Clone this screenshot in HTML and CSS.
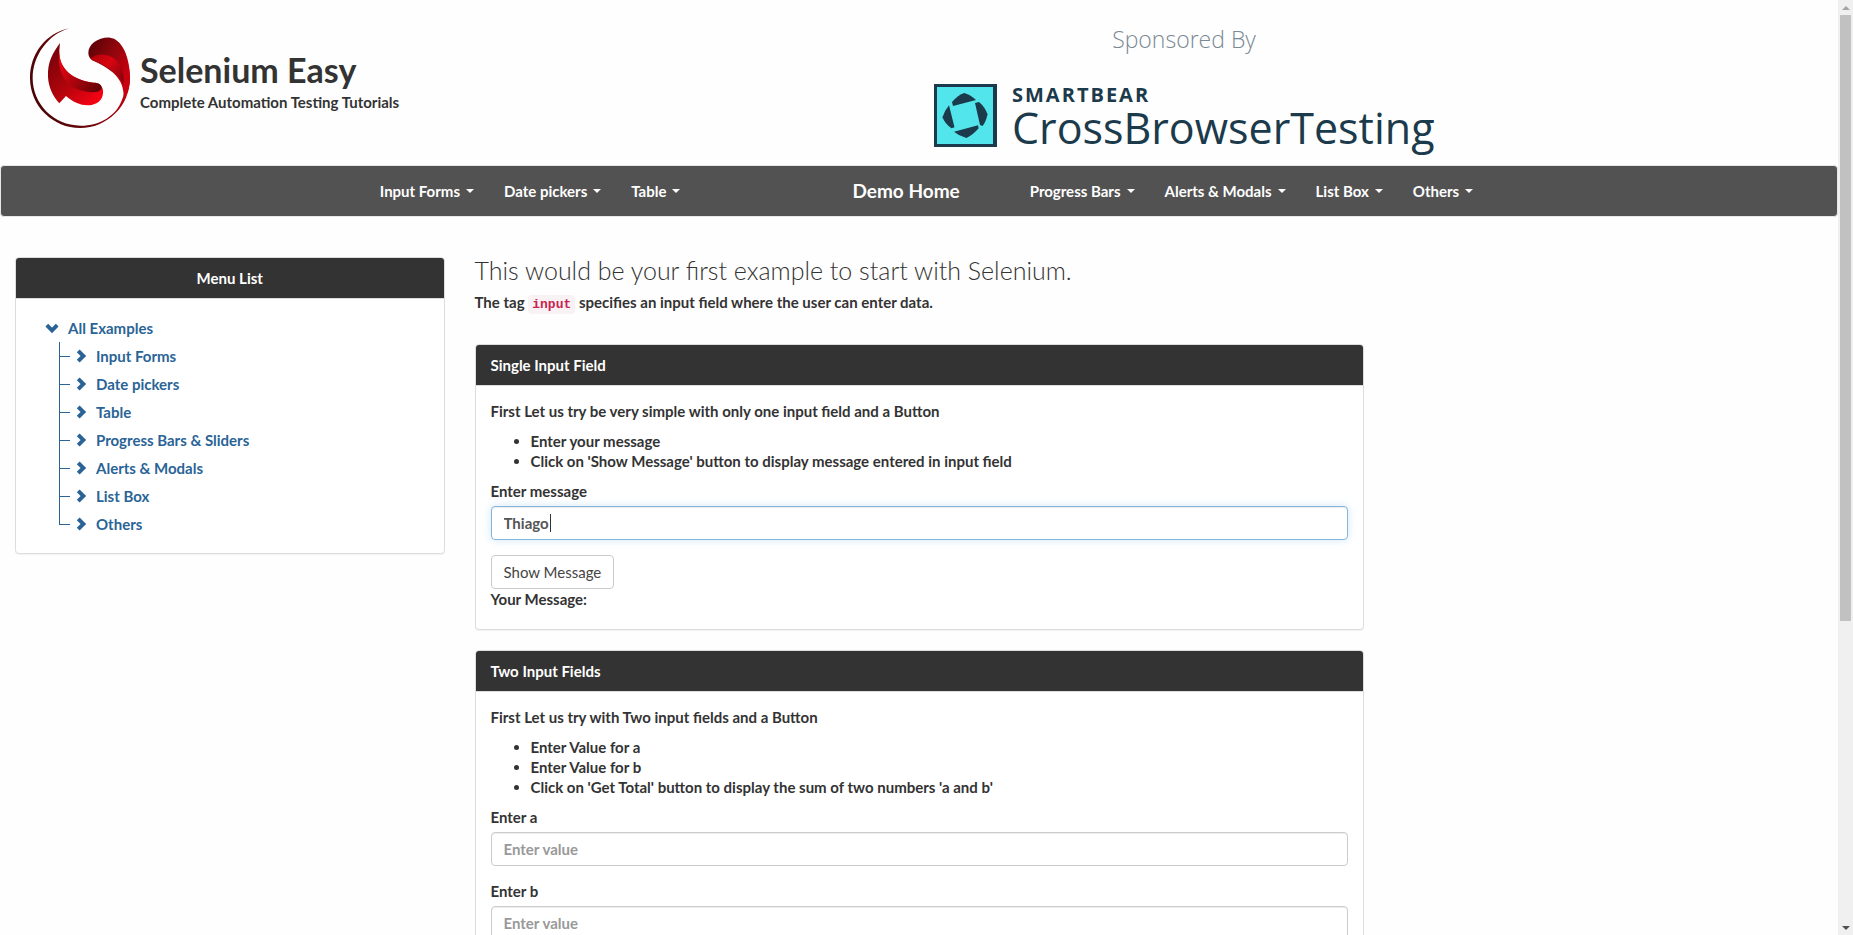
FILE: index.html
```html
<!DOCTYPE html>
<html lang="en">
<head>
<meta charset="utf-8">
<title>Selenium Easy</title>
<link rel="stylesheet" href="styles.css">
</head>
<body>
<svg class="defs" aria-hidden="true">
  <symbol id="chev" viewBox="0 0 14 14"><path d="M4.200 1.800 9.400 7l-5.200 5.200" fill="none" stroke="currentColor" stroke-width="3.900"/></symbol>
</svg>
<div class="window">
  <div class="page">
    <header class="header">
      <a class="brand" href="#">
        <svg class="brand-logo" viewBox="30 23 300 300" aria-hidden="true">
          <defs>
            <linearGradient id="ring" gradientUnits="userSpaceOnUse" x1="60" y1="260" x2="330" y2="170">
              <stop offset="0" stop-color="#4a0507"/><stop offset=".45" stop-color="#6d060b"/><stop offset="1" stop-color="#d0000f"/>
            </linearGradient>
            <linearGradient id="top" gradientUnits="userSpaceOnUse" x1="205" y1="80" x2="325" y2="150">
              <stop offset="0" stop-color="#5c0208"/><stop offset=".5" stop-color="#8e060c"/><stop offset="1" stop-color="#c8000f"/>
            </linearGradient>
            <linearGradient id="fold" gradientUnits="userSpaceOnUse" x1="215" y1="110" x2="315" y2="190">
              <stop offset="0" stop-color="#b0000b"/><stop offset=".4" stop-color="#d90511"/><stop offset="1" stop-color="#780208"/>
            </linearGradient>
            <linearGradient id="low" gradientUnits="userSpaceOnUse" x1="90" y1="110" x2="230" y2="250">
              <stop offset="0" stop-color="#7a0309"/><stop offset=".5" stop-color="#b3040c"/><stop offset="1" stop-color="#fa0214"/>
            </linearGradient>
            <linearGradient id="shade" gradientUnits="userSpaceOnUse" x1="120" y1="130" x2="245" y2="210">
              <stop offset="0" stop-color="#e80414"/><stop offset=".45" stop-color="#a8040c"/><stop offset="1" stop-color="#5c0207"/>
            </linearGradient>
          </defs>
          <path fill="url(#ring)" d="M148 24C78 38 30 100 30 173a150 150 0 0 0 300 0C330 145 322 120 312 100L303 165c12 23 14 50 3 73-16 47-66 78-124 78C100 316 38 250 38 174 38 105 85 42 148 24Z"/>
          <path fill="url(#top)" d="M217 120c-7-5-12-12-12-22 0-26 30-48 65-46 34 3 60 55 60 121 0 25-8 48-18 65-1-40-5-78-95-118Z"/>
          <path fill="url(#fold)" d="M211 114c18-14 45-16 70 0 25 17 34 45 29 80-14-35-38-52-93-74Z"/>
          <path fill="url(#low)" d="M120 68C98 98 82 125 84 170c2 32 14 56 34 79l20-22c22 20 49 31 77 27 25-5 36-22 34-44-3-18-15-23-29-23-62-7-105-42-102-97Z"/>
          <path fill="url(#shade)" d="M118 88c-4 56 42 92 102 99 16 0 26 6 25 18-6 10-24 13-44 9-58-8-92-50-83-126Z"/>
        </svg>
        <span class="brand-text">
          <span class="brand-name">Selenium Easy</span>
          <span class="brand-tagline">Complete Automation Testing Tutorials</span>
        </span>
      </a>
      <div class="sponsor">
        <p class="sponsor-label">Sponsored By</p>
        <a class="sponsor-link" href="#">
          <svg class="sponsor-icon" viewBox="0 0 63 63" aria-hidden="true">
            <rect width="63" height="63" fill="#1b3a4b"/><rect x="3" y="3" width="56" height="57" fill="#53e5ec"/>
            <g fill="#1b3a4b"><path d="M18 18Q24 11 30.300 9 37 11 42 16L19 22Z"/><path d="m41 19 4-1q6 5 8.500 12.300Q52 38 48.500 42L46 41Z"/><path d="m20 47.700 24-6.400.6 3Q39 51 32.400 54 25 52 20 47.700Z"/><path d="m15 21.300 5.500 22-3 1Q11 40 8.500 33.300 11 26 15 21.300Z"/></g>
          </svg>
          <span class="sponsor-text">
            <span class="sponsor-company">SMARTBEAR</span>
            <span class="sponsor-product">CrossBrowserTesting</span>
          </span>
        </a>
      </div>
    </header>

    <nav class="navbar">
      <ul class="nav nav-left">
        <li><a href="#">Input Forms <b class="caret"></b></a></li>
        <li><a href="#">Date pickers <b class="caret"></b></a></li>
        <li><a href="#">Table <b class="caret"></b></a></li>
      </ul>
      <a class="nav-home" href="#">Demo Home</a>
      <ul class="nav nav-right">
        <li><a href="#">Progress Bars <b class="caret"></b></a></li>
        <li><a href="#">Alerts &amp; Modals <b class="caret"></b></a></li>
        <li><a href="#">List Box <b class="caret"></b></a></li>
        <li><a href="#">Others <b class="caret"></b></a></li>
      </ul>
    </nav>

    <div class="row">
      <aside class="side">
        <section class="panel">
          <h2 class="panel-heading centered">Menu List</h2>
          <div class="panel-body">
            <a class="tree-root" href="#"><svg class="chev down" aria-hidden="true"><use href="#chev"/></svg>All Examples</a>
            <ul class="tree">
              <li><a href="#"><svg class="chev" aria-hidden="true"><use href="#chev"/></svg>Input Forms</a></li>
              <li><a href="#"><svg class="chev" aria-hidden="true"><use href="#chev"/></svg>Date pickers</a></li>
              <li><a href="#"><svg class="chev" aria-hidden="true"><use href="#chev"/></svg>Table</a></li>
              <li><a href="#"><svg class="chev" aria-hidden="true"><use href="#chev"/></svg>Progress Bars &amp; Sliders</a></li>
              <li><a href="#"><svg class="chev" aria-hidden="true"><use href="#chev"/></svg>Alerts &amp; Modals</a></li>
              <li><a href="#"><svg class="chev" aria-hidden="true"><use href="#chev"/></svg>List Box</a></li>
              <li><a href="#"><svg class="chev" aria-hidden="true"><use href="#chev"/></svg>Others</a></li>
            </ul>
          </div>
        </section>
      </aside>

      <main class="content">
        <h1 class="title">This would be your first example to start with Selenium.</h1>
        <p class="intro">The tag <code>input</code> specifies an input field where the user can enter data.</p>

        <section class="panel">
          <h2 class="panel-heading">Single Input Field</h2>
          <div class="panel-body">
            <p>First Let us try be very simple with only one input field and a Button</p>
            <ul class="steps">
              <li>Enter your message</li>
              <li>Click on 'Show Message' button to display message entered in input field</li>
            </ul>
            <form class="form">
              <div class="field">
                <label for="message">Enter message</label>
                <div class="control">
                  <input class="input active" id="message" type="text" value="Thiago">
                  <span class="text-cursor"></span>
                </div>
              </div>
              <button class="button" type="button">Show Message</button>
            </form>
            <div class="result">Your Message:</div>
          </div>
        </section>

        <section class="panel">
          <h2 class="panel-heading">Two Input Fields</h2>
          <div class="panel-body">
            <p>First Let us try with Two input fields and a Button</p>
            <ul class="steps">
              <li>Enter Value for a</li>
              <li>Enter Value for b</li>
              <li>Click on 'Get Total' button to display the sum of two numbers 'a and b'</li>
            </ul>
            <form class="form">
              <div class="field">
                <label for="value-a">Enter a</label>
                <input class="input" id="value-a" type="text" placeholder="Enter value">
              </div>
              <div class="field">
                <label for="value-b">Enter b</label>
                <input class="input" id="value-b" type="text" placeholder="Enter value">
              </div>
            </form>
          </div>
        </section>
      </main>
    </div>
  </div>

  <div class="scrollbar" aria-hidden="true">
    <span class="arrow up"></span>
    <div class="track"><div class="thumb"></div></div>
    <span class="arrow down-arrow"></span>
  </div>
</div>
</body>
</html>
```
FILE: styles.css
```css
* { box-sizing: border-box; }

body {
  margin: 0;
  background: #fefefe;
  color: #333;
  font: 700 15px/20px Lato, "Open Sans", sans-serif;
}

ul, p, h1, h2 { margin: 0; padding: 0; }
a { color: inherit; text-decoration: none; }
.defs { position: absolute; width: 0; height: 0; }

.window { display: flex; height: 100vh; }
.page { flex: 1; min-width: 0; overflow: hidden; }

/* Header */
.header {
  display: grid;
  grid-template-columns: 1fr 1fr;
  min-height: 165px;
}
.brand {
  display: flex;
  align-items: flex-start;
  gap: 10px;
  padding: 28px 30px 0;
}
.brand-logo { width: 100px; height: 100px; }
.brand-text { display: flex; flex-direction: column; padding-top: 20px; }
.brand-name { font-size: 34px; line-height: 44px; }

.sponsor {
  display: flex;
  flex-direction: column;
  align-items: flex-start;
  padding: 24px 15px 0;
  font-family: "Open Sans", "Noto Sans", sans-serif;
  color: #1b3a4b;
}
.sponsor-label {
  width: 500px;
  text-align: center;
  font-size: 23px;
  line-height: 30px;
  font-weight: 300;
  color: #7a8994;
}
.sponsor-link { display: flex; align-items: flex-start; gap: 15px; padding-top: 30px; }
.sponsor-icon { width: 63px; height: 63px; }
.sponsor-text { display: flex; flex-direction: column; }
.sponsor-company { font-size: 20px; line-height: 22px; font-weight: 700; letter-spacing: 2px; }
.sponsor-product { font-size: 43px; line-height: 43px; font-weight: 400; }

/* Navigation */
.navbar {
  display: flex;
  align-items: center;
  justify-content: center;
  margin-bottom: 40px;
  min-height: 52px;
  padding-left: 15px;
  border: 1px solid #e7e7e7;
  border-radius: 4px;
  background: #525252;
  color: #fff;
}
.nav { display: flex; list-style: none; }
.nav a { display: flex; align-items: center; gap: 6px; padding: 15px; }
.nav-home { margin: 0 40px 0 142px; padding: 15px; font-size: 19px; }
.caret {
  border-top: 4px solid #fff;
  border-left: 4px solid transparent;
  border-right: 4px solid transparent;
}

/* Columns */
.row { display: grid; grid-template-columns: 25% 50%; align-items: start; }
.side, .content { padding: 0 15px; }

.panel {
  margin-bottom: 20px;
  border: 1px solid #ddd;
  border-radius: 4px;
  background: #fff;
  box-shadow: 0 1px 1px rgba(0, 0, 0, .05);
}
.panel-heading {
  padding: 10px 15px;
  border-bottom: 1px solid #ddd;
  border-radius: 3px 3px 0 0;
  background: #333;
  color: #fff;
  font: inherit;
}
.centered { text-align: center; }
.panel-body { padding: 15px; }

/* Tree menu */
.tree-root, .tree a { display: flex; align-items: center; height: 28px; color: #2a6496; }
.tree-root { gap: 9px; padding-left: 14px; }
.chev { width: 14px; height: 14px; }
.chev.down { transform: rotate(90deg); }
.tree { list-style: none; padding-left: 28px; }
.tree li { position: relative; padding-left: 15px; }
.tree a { gap: 8px; }
.tree li::before {
  content: "";
  position: absolute;
  left: 0;
  top: 0;
  width: 10px;
  height: 14px;
  border-left: 1px solid #2a6496;
  border-bottom: 1px solid #2a6496;
}
.tree li:not(:last-child)::after {
  content: "";
  position: absolute;
  left: 0;
  top: 0;
  height: 100%;
  border-left: 1px solid #2a6496;
}

/* Main content */
.title { padding-bottom: 9px; font-size: 25px; line-height: 26px; font-weight: 300; }
.intro { margin-bottom: 30px; }
.intro code {
  padding: 2px 4px;
  border-radius: 4px;
  background: #f9f2f4;
  color: #c7254e;
  font: 700 13px/18px "Liberation Mono", monospace;
}
.steps { margin: 10px 0; padding-left: 40px; }
.form { display: flex; flex-direction: column; align-items: flex-start; }
.field { width: 100%; margin-bottom: 15px; }
.field label { display: block; margin-bottom: 5px; }
.control { position: relative; }
.input {
  display: block;
  width: 100%;
  height: 34px;
  padding: 6px 12px;
  border: 1px solid #ccc;
  border-radius: 4px;
  background: #fff;
  box-shadow: inset 0 1px 1px rgba(0, 0, 0, .075);
  color: #555;
  font: inherit;
}
.input::placeholder { color: #999; opacity: 1; }
.input.active {
  outline: 0;
  border-color: #84b5dc;
  box-shadow: inset 0 1px 1px rgba(0, 0, 0, .075), 0 0 8px rgba(102, 175, 233, .3);
}
.text-cursor {
  position: absolute;
  left: 59px;
  top: 8px;
  width: 1px;
  height: 18px;
  background: #333;
}
.button {
  height: 34px;
  padding: 6px 12px;
  border: 1px solid #ccc;
  border-radius: 4px;
  background: #fff;
  color: #444;
  font: inherit;
  font-weight: 400;
}
.result { padding-bottom: 5px; }

/* Scrollbar */
.scrollbar {
  display: flex;
  flex-direction: column;
  align-items: center;
  width: 15px;
  background: #f0f0f0;
}
.track { flex: 1; width: 11px; }
.thumb { height: 67%; background: #c1c1c1; }
.arrow { height: 15px; padding-top: 6px; }
.arrow::before {
  content: "";
  display: block;
  border-left: 4px solid transparent;
  border-right: 4px solid transparent;
}
.up::before { border-bottom: 4px solid #a3a3a3; }
.down-arrow::before { border-top: 4px solid #505050; }
```
